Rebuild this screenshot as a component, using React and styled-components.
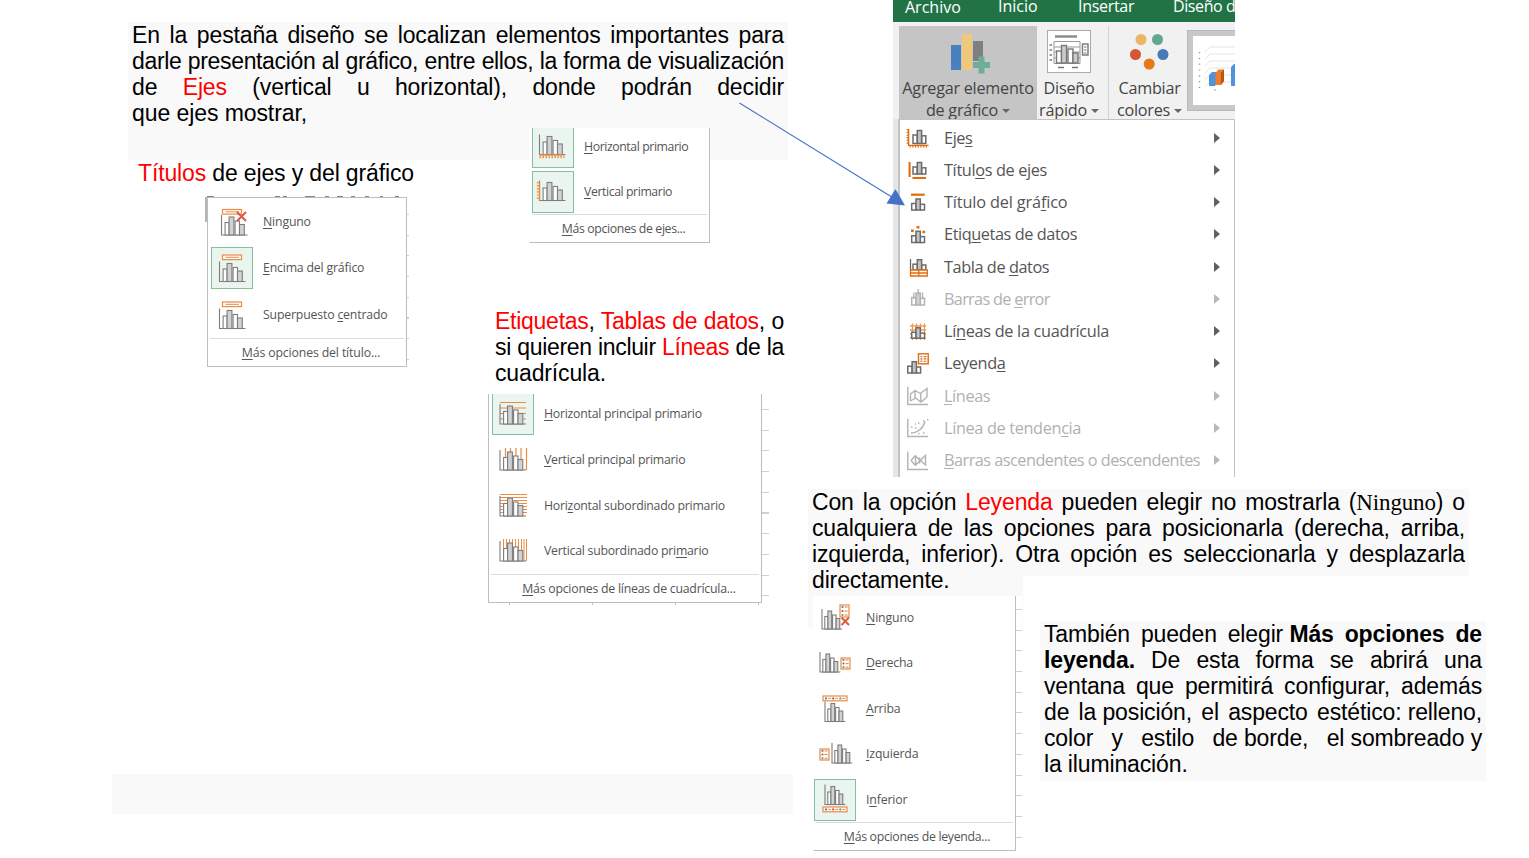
import React from "react";
import styled, { createGlobalStyle } from "styled-components";

const GlobalStyle = createGlobalStyle`
  * { box-sizing: border-box; }
  body { margin: 0; background: #fff; overflow: hidden; }
  u { text-underline-offset: 2px; text-decoration-thickness: 1px; }
`;

const Slide = styled.main`
  position: relative;
  width: 1529px;
  height: 858px;
  overflow: hidden;
  background: #fff;
  color: #000;
`;

/* An object placed freely on the slide. */
const Placed = styled.div`
  position: absolute;
  left: ${(p) => p.$x}px;
  top: ${(p) => p.$y}px;
  width: ${(p) => p.$w}px;
  height: ${(p) => (p.$h ? `${p.$h}px` : "auto")};
`;

const Shade = styled(Placed)`
  background: ${(p) => p.$fill || "#f9f9f9"};
`;

const Paragraph = styled(Placed)`
  padding: 0 4px;
  font: 23px/26px "Liberation Sans", Arial, sans-serif;
  background: ${(p) => (p.$shaded ? "#f9f9f9" : "transparent")};
`;

const Line = styled.div`
  height: 26px;
  white-space: nowrap;
  letter-spacing: ${(p) => p.$track || -0.14}px;
  text-align-last: ${(p) => (p.$loose ? "left" : "justify")};
`;

const Glue = styled.span`
  display: inline-block;
  text-align-last: left;
`;

const Red = styled.span`
  color: #f00;
`;

const Serif = styled.span`
  font-family: "Liberation Serif", "Times New Roman", serif;
`;

/* ---------- Gallery menus ---------- */

const Gallery = styled(Placed)`
  display: flex;
  flex-direction: column;
  background: #fff;
  overflow: hidden;
  border: 1px solid #bdbdbd;
  border-top-width: ${(p) => (p.$open ? 0 : 1)}px;
  border-left-color: ${(p) => (p.$leftless ? "#fff" : "#bdbdbd")};
  padding-top: ${(p) => p.$pt || 0}px;
  color: #555;
  font: 12.3px/16px "Open Sans", "Noto Sans", sans-serif;
  letter-spacing: ${(p) => p.$track}px;
`;

const GalleryItem = styled.div`
  display: flex;
  align-items: center;
  flex: none;
  height: ${(p) => p.$h}px;
  margin-top: ${(p) => -(p.$up || 0)}px;
  padding-left: ${(p) => p.$pl}px;
  gap: 10px;
  white-space: nowrap;
`;

const Thumb = styled.span`
  flex: none;
  display: flex;
  width: 42px;
  height: 42px;
  border: 1px solid ${(p) => (p.$on ? "#86bfa0" : "transparent")};
  background: ${(p) => (p.$on ? "#e9f5ee" : "transparent")};
`;

const Footer = styled.div`
  flex: 1;
  margin: 0 2px;
  border-top: 1px solid #dcdcdc;
  display: flex;
  align-items: center;
  justify-content: center;
  white-space: pre;
  padding-left: ${(p) => p.$pl || 0}px;
  letter-spacing: ${(p) => p.$track}px;
`;

const SheetEdge = styled(Placed)`
  background: repeating-linear-gradient(#d0d0d0 0 1px, transparent 1px 20.7px);
`;

const SheetColumns = styled(Placed)`
  background: repeating-linear-gradient(90deg, #c4c4c4 0 1px, transparent 1px 83px);
`;

function Bars({ x = 0, y = 0, sx = 1 }) {
  return (
    <g transform={`translate(${x} ${y})`} stroke="#7d7d7d" strokeWidth="1.1">
      <path d={`M0 -20V0H${26 * sx}`} fill="none" />
      <rect x={3.6 * sx} y="-12.5" width={4 * sx} height="12.5" fill="#fff" />
      <rect x={7.6 * sx} y="-18" width={4.8 * sx} height="18" fill="#d2d2d2" />
      <rect x={13.6 * sx} y="-14" width={4.4 * sx} height="14" fill="#fff" />
      <rect x={18 * sx} y="-10.5" width={4.8 * sx} height="10.5" fill="#d2d2d2" />
    </g>
  );
}

const ORANGE = "#ec8b43";

function Cross({ x, y, s }) {
  return (
    <path
      d={`M${x} ${y}l${s} ${s}M${x + s} ${y}l${-s} ${s}`}
      stroke="#dc5a41"
      strokeWidth="2"
      fill="none"
    />
  );
}

function TitleBox({ y }) {
  return (
    <g fill="none" stroke={ORANGE}>
      <rect x="10.5" y={y} width="19" height="4.6" fill="#fff" strokeWidth="1.2" />
      <path d={`M13.5 ${y + 2.3}H27`} />
    </g>
  );
}

function LegendColumn({ x, y, h = 12 }) {
  const step = h / 3;
  return (
    <g>
      <rect x={x} y={y} width="9" height={h} fill="#fff" stroke={ORANGE} strokeWidth="1.2" />
      {["#3f78b8", "#d04a2b", "#4f9c7b"].map((c, i) => (
        <g key={c}>
          <rect x={x + 1.6} y={y + step * (i + 0.5) - 0.9} width="1.8" height="1.8" fill={c} />
          <rect x={x + 4.6} y={y + step * (i + 0.5) - 0.5} width="3" height="1.1" fill={ORANGE} />
        </g>
      ))}
    </g>
  );
}

function LegendRow({ x, y }) {
  return (
    <g>
      <rect x={x} y={y} width="24" height="4.8" fill="#fff" stroke={ORANGE} strokeWidth="1.2" />
      {["#3f78b8", "#d04a2b", "#4f9c7b"].map((c, i) => (
        <g key={c}>
          <rect x={x + 2 + i * 7.2} y={y + 1.5} width="1.9" height="1.9" fill={c} />
          <rect x={x + 5 + i * 7.2} y={y + 1.9} width="3" height="1" fill={ORANGE} />
        </g>
      ))}
    </g>
  );
}

const thumbs = {
  titleNone: <><Bars x={9.5} y={33} /><TitleBox y={7.5} /><Cross x={25} y={10} s={9} /></>,
  titleAbove: <><TitleBox y={7} /><Bars x={7.5} y={33.5} /></>,
  titleOver: <><Bars x={7.5} y={33.5} /><TitleBox y={7} /></>,
  axisH: (
    <>
      <Bars x={6.5} y={27.5} />
      <path d="M6.5 28H31.5" stroke={ORANGE} strokeWidth="1.3" />
      <path d="M6.5 30H31.5" stroke={ORANGE} strokeWidth="2.4" strokeDasharray="1.4 1.6" />
    </>
  ),
  axisV: (
    <>
      <Bars x={6.5} y={28.5} />
      <path d="M6.5 10V28.5" stroke={ORANGE} strokeWidth="1.4" />
      <path d="M4.8 10V28.5" stroke={ORANGE} strokeWidth="2" strokeDasharray="1.2 1.9" />
    </>
  ),
  gridH: (
    <>
      <path d="M7 8.5H33M7 14H33M7 19.5H33M7 25H33" stroke={ORANGE} strokeWidth="1.2" />
      <Bars x={7} y={30} />
    </>
  ),
  gridV: (
    <>
      <path d="M12.5 8V30M17.5 8V30M23 8V30M28 8V30M33.5 8V30" stroke={ORANGE} strokeWidth="1.2" />
      <Bars x={7} y={30} />
    </>
  ),
  gridHMinor: (
    <>
      <path d="M7 8.5H34M7 11.5H34M7 14.5H34M7 17.5H34M7 20.5H34M7 23.5H34M7 26.5H34" stroke={ORANGE} />
      <Bars x={7} y={30} />
    </>
  ),
  gridVMinor: (
    <>
      <path
        d="M10.5 8V30M13.5 8V30M16.5 8V30M19.5 8V30M22.5 8V30M25.5 8V30M28.5 8V30M31 8V30M33.5 8V30"
        stroke={ORANGE}
      />
      <Bars x={7} y={30} />
    </>
  ),
  legendNone: <><Bars x={7} y={31} sx={0.78} /><LegendColumn x={25} y={7} /><Cross x={26.5} y={19.5} s={7.5} /></>,
  legendRight: <><Bars x={5} y={29} sx={0.78} /><LegendColumn x={26} y={15} h={11} /></>,
  legendTop: <><LegendRow x={8} y={7} /><Bars x={10} y={32.5} sx={0.78} /></>,
  legendLeft: <><LegendColumn x={5} y={15} h={11} /><Bars x={17} y={29} sx={0.78} /></>,
  legendBottom: <><Bars x={10} y={24.5} sx={0.78} /><LegendRow x={8} y={27} /></>,
};

function Option({ icon, on, h, up, pl, children }) {
  return (
    <GalleryItem $h={h} $up={up} $pl={pl}>
      <Thumb $on={on}>
        <svg width="40" height="40">{thumbs[icon]}</svg>
      </Thumb>
      <span>{children}</span>
    </GalleryItem>
  );
}

/* ---------- Ribbon and its drop-down ---------- */

const Ribbon = styled(Placed)`
  display: flex;
  flex-direction: column;
  overflow: hidden;
  background: #e6e6e6;
  font-family: "Open Sans", "Noto Sans", sans-serif;
`;

const Tabs = styled.div`
  display: flex;
  flex: none;
  height: 22px;
  padding-left: 12px;
  background: #217346;
  color: #fff;
  font-size: 16px;
  line-height: 20px;
  white-space: nowrap;
`;

const Tab = styled.span`
  flex: none;
  width: ${(p) => p.$w}px;
  margin-top: ${(p) => (p.$file ? -3 : -4)}px;
  letter-spacing: ${(p) => p.$track || 0}px;
`;

const Tools = styled.div`
  display: flex;
  flex: none;
  height: 97px;
  padding: 4px 0 0 6px;
  background: #f1f1f1;
`;

const Tool = styled.div`
  flex: none;
  display: flex;
  flex-direction: column;
  align-items: center;
  width: ${(p) => p.$w}px;
  padding: 3px 0 0 ${(p) => p.$pl || 0}px;
  margin-right: ${(p) => p.$mr || 0}px;
  background: ${(p) => (p.$on ? "#c5c5c5" : "transparent")};
  color: #444;
  font-size: 16.2px;
  line-height: 21.5px;
  letter-spacing: -0.24px;
  white-space: nowrap;
  svg { flex: none; margin-bottom: 1px; }
`;

const Rule = styled.span`
  flex: none;
  width: 1px;
  background: #d2d2d2;
`;

const Caret = styled.i`
  display: inline-block;
  margin: 0 0 3px 4px;
  border: 4px solid transparent;
  border-top: 4px solid #666;
  border-bottom: 0;
`;

const Preview = styled.div`
  flex: none;
  width: 80px;
  height: 81px;
  margin: 4px 0 0 4px;
  border: 1px solid #b3b9bf;
  padding: 5px;
  background: #c8c8c8;
`;

const DropDown = styled.div`
  flex: none;
  margin-left: 5px;
  height: 359px;
  padding-top: 2px;
  background: #fff;
  border: solid #c3c3c3;
  border-width: 1px 1px 0 2px;
`;

const Command = styled.div`
  display: flex;
  align-items: center;
  height: 32.25px;
  padding: 0 14px 0 6px;
  color: ${(p) => (p.$off ? "#b1b1b1" : "#555")};
  font-size: 16.3px;
  line-height: 20px;
  letter-spacing: ${(p) => p.$track}px;
  white-space: nowrap;
  svg { flex: none; opacity: ${(p) => (p.$off ? 0.75 : 1)}; }
`;

const CommandLabel = styled.span`
  flex: 1;
  margin: -1px 0 0 14px;
`;

const Arrow = styled.i`
  margin-top: -1px;
  border: 5px solid transparent;
  border-left: 6px solid ${(p) => (p.$off ? "#b8b8b8" : "#606060")};
  border-right: 0;
`;

const O = "#e36c0a";

function Trio({ x, top, base, c = "#6b6b6b" }) {
  return (
    <g stroke={c} strokeWidth="1.5">
      <rect x={x} y={top + 4.5} width="4.3" height={base - top - 4.5} fill="#fff" />
      <rect x={x + 8.6} y={top + 5.3} width="4.2" height={base - top - 5.3} fill="#fff" />
      <rect x={x + 4.3} y={top} width="4.3" height={base - top} fill="#c3c3c3" />
    </g>
  );
}

const G = "#9a9a9a";
const commandIcons = {
  axes: (
    <>
      <Trio x={7} top={4.5} base={17.5} />
      <path d="M2.6 3V19.4H22.5" fill="none" stroke={O} strokeWidth="1.4" />
      <path d="M1.3 3V19M3.5 20.8H22.5" fill="none" stroke={O} strokeWidth="1.4" strokeDasharray="1.3 1.4" />
    </>
  ),
  axisTitles: <><Trio x={7} top={4.5} base={16} /><path d="M3.6 4V19M6.5 20H20" stroke={O} strokeWidth="2.1" /></>,
  chartTitle: <><path d="M5 3.7H18.7" stroke={O} strokeWidth="2.2" /><Trio x={5.7} top={8} base={19} /></>,
  labels: (
    <>
      <Trio x={5.7} top={8.3} base={19.5} />
      <path d="M10.6 4.2H13.4M5 7.8H7.8M16.4 9H19.2" stroke={O} strokeWidth="2.6" />
    </>
  ),
  table: (
    <>
      <path d="M4.5 4V15" stroke="#6b6b6b" strokeWidth="1.3" />
      <Trio x={7} top={4.7} base={15} />
      <path d="M4.5 15H21.3V21H4.5ZM4.5 18H21.3M12.8 15V21" fill="#fff" stroke={O} strokeWidth="1.3" />
    </>
  ),
  error: (
    <>
      <Trio x={5.7} top={6} base={18} c={G} />
      <path d="M7.8 5.5V12M12.2 2V8M16.6 5.5V12" stroke={G} strokeWidth="1.3" />
    </>
  ),
  grid: (
    <>
      <path d="M4 6H20M4 10H20M4 14H20M4 18H20M6.5 3.5V20M10.5 3.5V20M14.5 3.5V20M18.5 3.5V20" stroke="#ef9a52" strokeWidth="1.3" />
      <Trio x={5.7} top={7.8} base={18.2} />
    </>
  ),
  legend: (
    <>
      <Trio x={1.8} top={9.7} base={21} />
      <rect x="12.5" y="1.8" width="9.7" height="10" fill="#fff" stroke={O} strokeWidth="1.4" />
      <path d="M14.5 4.6H16.3M14.5 9.2H16.3" stroke={O} strokeWidth="1.3" />
      <path d="M14.5 6.9H16.3" stroke="#3f78b8" strokeWidth="1.3" />
      <path d="M17.6 4.6H20.4M17.6 6.9H20.4M17.6 9.2H20.4" stroke={O} strokeWidth="1.1" />
    </>
  ),
  lines: (
    <g fill="none" stroke={G} strokeWidth="1.4">
      <path d="M1.8 2.7V20.5H22" />
      <path d="M4.5 17V10L9 6.5L14.5 9.5L21 4.5V13L15 18L9.5 14L4.5 17M9 6.5V14M14.8 9.5V18" />
    </g>
  ),
  trend: (
    <g fill="none" stroke={G} strokeWidth="1.4">
      <path d="M1.8 2.7V20.5H22M5 17C11 17 17 13 19 5.5" />
      <path d="M5 11H6.5M9 12H10.5M12 7H13.5M17 5H18.5M21 3.8H22.5M12 17.5H13.5M17 17H18.5M9 8H10" />
    </g>
  ),
  upDown: (
    <g fill="none" stroke={G} strokeWidth="1.4">
      <path d="M1.8 2.7V20.5H22" />
      <path d="M5 11.5L8.5 7.5H10L19.5 16V6.5L10 15.5H8.5L5 11.5M9.5 6V17M13.5 8.5V14.5" />
    </g>
  ),
};

const commands = [
  { icon: "axes", track: -0.4, label: <>Eje<u>s</u></> },
  { icon: "axisTitles", track: -0.35, label: <>Títul<u>o</u>s de ejes</> },
  { icon: "chartTitle", track: -0.15, label: <>Título del grá<u>f</u>ico</> },
  { icon: "labels", track: -0.42, label: <>Etiq<u>u</u>etas de datos</> },
  { icon: "table", track: -0.42, label: <>Tabla de <u>d</u>atos</> },
  { icon: "error", track: -0.7, label: <>Barras de <u>e</u>rror</>, off: true },
  { icon: "grid", track: -0.3, label: <>Lí<u>n</u>eas de la cuadrícula</> },
  { icon: "legend", track: -0.35, label: <>Leyend<u>a</u></> },
  { icon: "lines", track: -0.4, label: <><u>L</u>íneas</>, off: true },
  { icon: "trend", track: -0.35, label: <>Línea de tenden<u>c</u>ia</>, off: true },
  { icon: "upDown", track: -0.52, label: <><u>B</u>arras ascendentes o descendentes</>, off: true },
];

function Dots() {
  return (
    <svg width="44" height="48">
      <circle cx="13" cy="10.5" r="5.5" fill="#eab565" />
      <circle cx="29.5" cy="10.5" r="5.5" fill="#65a78e" />
      <circle cx="7.5" cy="25.5" r="5.5" fill="#d65532" />
      <circle cx="35" cy="25.5" r="5.5" fill="#467ab8" />
      <circle cx="21.2" cy="35" r="5.5" fill="#e67817" />
    </svg>
  );
}

function RibbonShot() {
  return (
    <Ribbon $x={893} $y={0} $w={342} $h={477}>
      <Tabs>
        <Tab $w={93} $file>Archivo</Tab>
        <Tab $w={80}>Inicio</Tab>
        <Tab $w={95} $track={-0.3}>Insertar</Tab>
        <Tab $w={70} $track={-0.4}>Diseño d</Tab>
      </Tabs>
      <Tools>
        <Tool $w={138} $on>
          <svg width="44" height="48">
            <rect x="5" y="16" width="10" height="25" fill="#4a80bd" />
            <rect x="16" y="5" width="10" height="36" fill="#f0c87c" />
            <rect x="27" y="12" width="10" height="20" fill="#7f7f7f" />
            <path d="M35.5 27.5V44.5M27 36H44" stroke="#70ad95" strokeWidth="6" />
          </svg>
          <span>Agregar elemento</span>
          <span>de gráfico<Caret /></span>
        </Tool>
        <Tool $w={64} $mr={7}>
          <svg width="44" height="48" fill="none" stroke="#777">
            <rect x=".5" y="1.5" width="43" height="42" fill="#fff" stroke="#aaa" />
            <path d="M8 7.5H30" stroke="#888" strokeWidth="2.4" />
            <path d="M7 12.5H33V34.5H7ZM7 18H33M7 23H33M7 29H33" stroke="#999" />
            <path d="M2.5 16H5M2.5 21H5M2.5 26H5M2.5 31H5M11 38.5H17M25 38.5H31" strokeWidth="1.4" />
            <g strokeWidth="1.4">
              <rect x="9.5" y="22" width="5" height="12" fill="#fff" />
              <rect x="14.5" y="16.5" width="5" height="17.5" fill="#ccc" />
              <rect x="21" y="20" width="5" height="14" fill="#fff" />
              <rect x="26" y="24" width="5" height="10" fill="#ccc" />
              <rect x="35.5" y="15" width="5.5" height="11" fill="#fff" />
            </g>
            <path d="M37 18H39.5M37 21H39.5M37 24H39.5" />
          </svg>
          <span>Diseño</span>
          <span>rápido<Caret /></span>
        </Tool>
        <Rule />
        <Tool $w={74} $pl={7}>
          <Dots />
          <span>Cambiar</span>
          <span>colores<Caret /></span>
        </Tool>
        <Preview>
          <svg width="70" height="69">
            <rect width="70" height="69" fill="#fff" />
            <path d="M12 16L17 11H50M12 23L17 18H50M12 30L17 25H50M12 37L17 32H50M12 44L17 39H50M12 51L17 46H50" fill="none" stroke="#e4e4e4" />
            <path d="M6.5 16V53" stroke="#999" strokeWidth="1.5" strokeDasharray="1.2 4.6" />
            <path d="M16 39L19 36H25V46L22 50H16Z" fill="#4f94d8" />
            <path d="M22.5 37L25.5 33.5H31V45L28 49H22.5Z" fill="#ee7b2b" />
            <path d="M28 37L31 33.5V45L28 49Z" fill="#b8560f" />
            <path d="M38 31L41 28H50V50H38Z" fill="#4f94d8" />
            <path d="M21 54H23" stroke="#999" />
          </svg>
        </Preview>
      </Tools>
      <DropDown>
        {commands.map(({ icon, track, label, off }) => (
          <Command key={icon} $off={off} $track={track}>
            <svg width="24" height="24">{commandIcons[icon]}</svg>
            <CommandLabel>{label}</CommandLabel>
            <Arrow $off={off} />
          </Command>
        ))}
      </DropDown>
    </Ribbon>
  );
}

export default function App() {
  return (
    <Slide>
      <GlobalStyle />

      <Paragraph $x={128} $y={22} $w={660} $h={138} $shaded>
        <Line>En la pestaña diseño se localizan elementos importantes para</Line>
        <Line $track={-0.35}>darle presentación al gráfico, entre ellos, la forma de visualización</Line>
        <Line>de <Red>Ejes</Red> (vertical u horizontal), donde podrán decidir</Line>
        <Line $loose $track={-0.08}>que ejes mostrar,</Line>
      </Paragraph>

      <Paragraph $x={134} $y={160} $w={300}>
        <Line $loose><Red>Títulos</Red> de ejes y del gráfico</Line>
      </Paragraph>

      <SheetEdge $x={404} $y={214} $w={5} $h={152} />
      <Placed $x={205} $y={196} $w={202} $h={26}>
        <svg width="202" height="26">
          <path d="M1 1V26" stroke="#b5b5b5" strokeWidth="2" />
          <path d="M2 .5H9M70 .5H75M78 .5H82M100 .5H110M120 .5H124M132 .5H138M146 .5H150M160 .5H164M175 .5H178M190 .5H194" stroke="#7a8793" />
        </svg>
      </Placed>
      <Gallery $x={207} $y={197} $w={200} $h={170} $pt={1} $track={-0.18}>
        <Option icon="titleNone" h={46} pl={3}><u>N</u>inguno</Option>
        <Option icon="titleAbove" on h={46} pl={3}><u>E</u>ncima del gráfico</Option>
        <Option icon="titleOver" h={47} pl={3}>Superpuesto <u>c</u>entrado</Option>
        <Footer $pl={8} $track={-0.14}><u>M</u>ás opciones del título...</Footer>
      </Gallery>

      <Gallery $x={529} $y={125} $w={181} $h={118} $open $leftless $track={-0.42}>
        <Option icon="axisH" on h={44} pl={2}><u>H</u>orizontal primario</Option>
        <Option icon="axisV" on h={45} pl={2}><u>V</u>ertical primario</Option>
        <Footer $pl={8} $track={-0.36}><u>M</u>ás opciones de ejes...</Footer>
      </Gallery>
      <Shade $x={528} $y={122} $w={183} $h={6} />

      <Paragraph $x={491} $y={308} $w={297}>
        <Line $track={-0.26}><Red>Etiquetas</Red>, <Red>Tablas de datos</Red>, o</Line>
        <Line $track={-0.34}>si quieren incluir <Red>Líneas</Red> de la</Line>
        <Line $loose>cuadrícula.</Line>
      </Paragraph>

      <SheetEdge $x={762} $y={409} $w={7} $h={196} />
      <SheetColumns $x={509} $y={602} $w={255} $h={3} />
      <Gallery $x={488} $y={394} $w={274} $h={209} $open $track={-0.25}>
        <Option icon="gridH" on h={46} up={3.5} pl={3}><u>H</u>orizontal principal primario</Option>
        <Option icon="gridV" h={46} pl={3}><u>V</u>ertical principal primario</Option>
        <Option icon="gridHMinor" h={46} pl={3}>Hori<u>z</u>ontal subordinado primario</Option>
        <Option icon="gridVMinor" h={45.5} pl={3}>Vertical subordinado pri<u>m</u>ario</Option>
        <Footer $pl={8} $track={-0.23}><u>M</u>ás opciones de líneas de cuadrícula...</Footer>
      </Gallery>

      <RibbonShot />

      <Placed $x={735} $y={98} $w={175} $h={112}>
        <svg width="175" height="112">
          <path d="M4.5 5L160 101" stroke="#4472c4" strokeWidth="1.1" />
          <path d="M170 107.5L151.5 105.5L160.5 91Z" fill="#4472c4" />
        </svg>
      </Placed>

      <Shade $x={808} $y={576} $w={215} $h={52} />
      <Paragraph $x={808} $y={489} $w={661} $h={87} $shaded>
        <Line>Con la opción <Red>Leyenda</Red> pueden elegir no mostrarla (<Serif>Ninguno</Serif>) o</Line>
        <Line>cualquiera de las opciones para posicionarla (derecha, arriba,</Line>
        <Line>izquierda, inferior). Otra opción es seleccionarla y desplazarla</Line>
        <Line $loose>directamente.</Line>
      </Paragraph>

      <Shade $x={814} $y={596} $w={208} $h={255} $fill="#fff" />
      <SheetEdge $x={1016} $y={609} $w={6} $h={242} />
      <Gallery $x={813} $y={596} $w={203} $h={255} $open $leftless $track={-0.14}>
        <Option icon="legendNone" h={45.5} up={1.25} pl={0}><u>N</u>inguno</Option>
        <Option icon="legendRight" h={45.5} pl={0}><u>D</u>erecha</Option>
        <Option icon="legendTop" h={45.5} pl={0}><u>A</u>rriba</Option>
        <Option icon="legendLeft" h={45.5} pl={0}><u>I</u>zquierda</Option>
        <Option icon="legendBottom" on h={45.5} pl={0}>I<u>n</u>ferior</Option>
        <Footer $pl={5} $track={-0.3}><u>M</u>ás opciones de leyenda...</Footer>
      </Gallery>

      <Paragraph $x={1040} $y={621} $w={446} $h={160} $shaded>
        <Line>También pueden <Glue>elegir <b>Más</b></Glue> <b>opciones de</b></Line>
        <Line><b>leyenda.</b> De esta forma se abrirá una</Line>
        <Line>ventana que permitirá configurar, además</Line>
        <Line>de <Glue>la posición,</Glue> el aspecto <Glue>estético: relleno,</Glue></Line>
        <Line>color y estilo <Glue>de borde,</Glue> <Glue>el sombreado y</Glue></Line>
        <Line $loose>la iluminación.</Line>
      </Paragraph>

      <Shade $x={112} $y={774} $w={681} $h={40} />
    </Slide>
  );
}
